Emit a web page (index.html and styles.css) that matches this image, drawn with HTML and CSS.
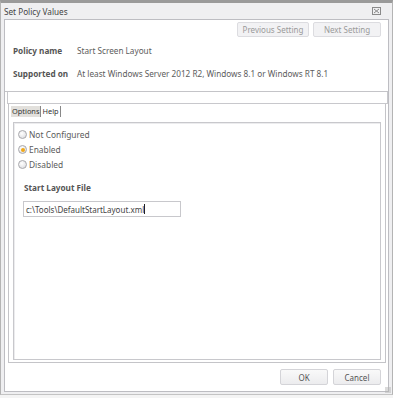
FILE: index.html
```
<!DOCTYPE html>
<html lang="en">
<head>
    <meta charset="UTF-8">
    <title>Set Policy Values</title>
    <link rel="stylesheet" href="styles.css">
</head>
<body>
    <div class="window">
        <div class="titlebar">
            <span class="title">Set Policy Values</span>
            <svg class="close" width="9" height="8" viewBox="0 0 9 8">
                <rect x="0.5" y="0.5" width="8" height="7" fill="none" stroke="#8a8a8a"/>
                <path d="M2 2 L7 6 M7 2 L2 6" stroke="#8a8a8a" stroke-width="1"/>
            </svg>
        </div>

        <div class="frame">
            <div class="header">
                <div class="nav">
                    <button class="btn btn-prev" disabled>Previous Setting</button>
                    <button class="btn btn-next" disabled>Next Setting</button>
                </div>
                <div class="info-row first">
                    <span class="info-label">Policy name</span>
                    <span class="info-value">Start Screen Layout</span>
                </div>
                <div class="info-row">
                    <span class="info-label">Supported on</span>
                    <span class="info-value">At least Windows Server 2012 R2, Windows 8.1 or Windows RT 8.1</span>
                </div>
            </div>

            <div class="strip"></div>

            <div class="tabpanel">
                <div class="tabs">
                    <span class="tab active">Options</span>
                    <span class="tab">Help</span>
                </div>
                <div class="options">
                    <label class="radio"><span class="dot"></span>Not Configured</label>
                    <label class="radio"><span class="dot checked"></span>Enabled</label>
                    <label class="radio"><span class="dot"></span>Disabled</label>

                    <div class="field-label">Start Layout File</div>
                    <div class="textbox">c:\Tools\DefaultStartLayout.xml<span class="caret"></span></div>
                </div>
            </div>

            <div class="footer">
                <button class="btn btn-ok">OK</button>
                <button class="btn btn-cancel">Cancel</button>
            </div>
        </div>
        <div class="grip"></div>
    </div>
</body>
</html>
```

FILE: styles.css
```
html, body {
    margin: 0;
    padding: 0;
}
body {
    width: 393px;
    height: 398px;
    background: #f4f4f4;
    font-family: "Noto Sans", "Open Sans", sans-serif;
    font-size: 8.2px;
    color: #5c5c5c;
    overflow: hidden;
}
.window {
    position: relative;
    height: 395px;
    border-top: 3px solid #9a9a9a;
    border-left: 1px solid #b4b4b4;
    border-right: 1px solid #b4b4b4;
    border-bottom: 1px solid #c4c4c4;
    background: #efeff1;
    box-sizing: border-box;
    padding: 0 3px 2px 3px;
    display: flex;
    flex-direction: column;
}
.titlebar {
    height: 16px;
    display: flex;
    align-items: center;
    justify-content: space-between;
    padding: 0 8px 0 0;
}
.title {
    color: #444;
    font-size: 8.2px;
}
.close {
    display: block;
}
.frame {
    flex: 1;
    background: #fff;
    border: 1px solid #bdbdc2;
    display: flex;
    flex-direction: column;
    padding: 0 2px;
}
.header {
    height: 71px;
    border-bottom: 1px solid #c4c4c8;
    margin: 0 -2px;
    padding: 0 8px;
}
.nav {
    display: flex;
    justify-content: flex-end;
    gap: 4px;
    padding-top: 2px;
    margin-right: -1px;
}
.btn {
    font-family: inherit;
    font-size: 8px;
    height: 15px;
    padding: 0;
    border: 1px solid #d4d4d8;
    border-radius: 2px;
    background: linear-gradient(#f9f9f9, #ececee);
    color: #555;
}
.btn[disabled] {
    color: #9a9a9a;
    background: #f2f2f4;
    border-color: #dcdce0;
}
.btn-prev { width: 72px; }
.btn-next { width: 68px; }
.info-row {
    display: flex;
    margin-top: 13px;
    line-height: 10px;
}
.info-row.first {
    margin-top: 9px;
}
.info-label {
    width: 64px;
    font-weight: bold;
    color: #555;
}
.strip {
    height: 11px;
    border: 1px solid #c8c8cc;
    border-top: none;
    margin: 0 -2px 0 0;
}
.tabpanel {
    flex: 1;
    border: 1px solid #c4c4c8;
    border-top: none;
    margin: 0 0 0 1px;
    display: flex;
    flex-direction: column;
    padding: 2px 4px 2px 4px;
}
.tabs {
    display: flex;
    height: 12px;
    line-height: 11px;
    font-size: 7.4px;
    color: #333;
    margin-left: -2px;
}
.tab {
    padding: 0 1px;
    border-right: 1px solid #888;
    height: 11px;
}
.tab.active {
    background: #e2e0dc;
}
.options {
    flex: 1;
    margin-top: 4px;
    border: 1px solid #c8c8cc;
    box-shadow: inset 1px 1px 0 #ececee;
    padding: 4px 0 0 4px;
}
.radio {
    display: flex;
    align-items: center;
    height: 15px;
    font-size: 8.4px;
}
.dot {
    width: 7px;
    height: 7px;
    border-radius: 50%;
    border: 1px solid #a8a8ac;
    background: radial-gradient(circle at 40% 35%, #fff, #d8d8dc);
    margin-right: 2px;
    position: relative;
}
.dot.checked::after {
    content: "";
    position: absolute;
    left: 1.5px;
    top: 1.5px;
    width: 4px;
    height: 4px;
    border-radius: 50%;
    background: #f0a818;
}
.field-label {
    font-weight: bold;
    margin: 10px 0 0 6px;
    color: #555;
}
.textbox {
    margin: 8px 0 0 5px;
    width: 152px;
    height: 14px;
    border: 1px solid #c8c8cc;
    padding: 0 2px;
    color: #444;
    font-size: 8px;
    display: flex;
    align-items: center;
}
.caret {
    display: inline-block;
    width: 1px;
    height: 10px;
    background: #222;
}
.footer {
    height: 28px;
    display: flex;
    justify-content: flex-end;
    align-items: center;
    gap: 5px;
    padding-right: 5px;
}
.btn-ok { width: 48px; height: 16px; }
.btn-cancel { width: 48px; height: 16px; }
.grip {
    position: absolute;
    right: 1px;
    bottom: 1px;
    width: 6px;
    height: 6px;
    background: radial-gradient(circle, #b0b0b0 0.6px, transparent 0.8px) 0 0 / 2px 2px;
}
```
